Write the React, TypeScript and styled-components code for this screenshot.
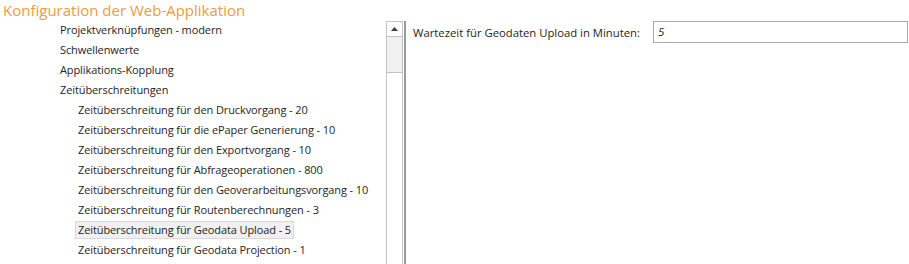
import React from "react";
import styled, { createGlobalStyle } from "styled-components";

const Global = createGlobalStyle`
  html, body { margin: 0; padding: 0; background: #ffffff; }
  body { font-family: "Open Sans", "Noto Sans", sans-serif; color: #1e1e1e; }
  #root { width: 909px; height: 264px; overflow: hidden; }
`;

const Page = styled.div`
  display: flex;
  flex-direction: column;
  width: 909px;
  height: 264px;
  overflow: hidden;
`;

const Title = styled.h1`
  margin: 0;
  height: 20px;
  padding-left: 3px;
  font-size: 15px;
  font-weight: 400;
  line-height: 20px;
  color: #ef9b41;
  white-space: nowrap;
`;

const Main = styled.div`
  display: flex;
  flex: 1;
  min-height: 0;
`;

const TreePanel = styled.div`
  width: 386px;
  overflow: hidden;
  display: flex;
  flex-direction: column;
`;

const Row = styled.div<{ $level: number }>`
  height: 20px;
  flex: 0 0 20px;
  display: flex;
  align-items: center;
  padding-left: ${(p) => (p.$level === 1 ? 57 : 75)}px;
`;

const Label = styled.span<{ $selected?: boolean }>`
  font-size: 11px;
  letter-spacing: -0.1px;
  line-height: 15px;
  white-space: nowrap;
  padding: 0 2px;
  height: 16px;
  background: ${(p) => (p.$selected ? "#f0f0f0" : "transparent")};
  border: 1px solid ${(p) => (p.$selected ? "#d9d9d9" : "transparent")};
`;

const ScrollBar = styled.div`
  width: 17px;
  margin-top: 1px;
  display: flex;
  flex-direction: column;
`;

const ArrowButton = styled.div`
  height: 14px;
  border: 1px solid #c4c4c4;
  background: #ffffff;
  display: flex;
  align-items: center;
  justify-content: center;
`;

const Thumb = styled.div`
  height: 35px;
  background: #f0f0f0;
  border-left: 1px solid #c4c4c4;
  border-right: 1px solid #c4c4c4;
  border-bottom: 1px solid #c4c4c4;
`;

const Track = styled.div`
  flex: 1;
  background: #ffffff;
  border-left: 1px solid #c4c4c4;
  border-right: 1px solid #c4c4c4;
`;

const Splitter = styled.div`
  width: 2px;
  margin-left: 1px;
  margin-top: 1px;
  background: #9a9a9a;
`;

const RightPanel = styled.div`
  flex: 1;
  padding: 1px 1px 0 7px;
`;

const FieldRow = styled.div`
  display: grid;
  grid-template-columns: 240px 1fr;
  align-items: center;
  height: 22px;
`;

const FieldLabel = styled.label`
  font-size: 11.3px;
  white-space: nowrap;
  color: #1e1e1e;
`;

const Input = styled.div`
  height: 20px;
  border: 1px solid #a9a9a9;
  font-size: 11.5px;
  font-style: italic;
  line-height: 20px;
  padding-left: 4px;
`;

const items: { level: number; text: string; selected?: boolean }[] = [
  { level: 1, text: "Projektverknüpfungen - modern" },
  { level: 1, text: "Schwellenwerte" },
  { level: 1, text: "Applikations-Kopplung" },
  { level: 1, text: "Zeitüberschreitungen" },
  { level: 2, text: "Zeitüberschreitung für den Druckvorgang - 20" },
  { level: 2, text: "Zeitüberschreitung für die ePaper Generierung - 10" },
  { level: 2, text: "Zeitüberschreitung für den Exportvorgang - 10" },
  { level: 2, text: "Zeitüberschreitung für Abfrageoperationen - 800" },
  { level: 2, text: "Zeitüberschreitung für den Geoverarbeitungsvorgang - 10" },
  { level: 2, text: "Zeitüberschreitung für Routenberechnungen - 3" },
  { level: 2, text: "Zeitüberschreitung für Geodata Upload - 5", selected: true },
  { level: 2, text: "Zeitüberschreitung für Geodata Projection - 1" },
];

export default function App() {
  return (
    <>
      <Global />
      <Page>
        <Title>Konfiguration der Web-Applikation</Title>
        <Main>
          <TreePanel>
            {items.map((it) => (
              <Row key={it.text} $level={it.level}>
                <Label $selected={it.selected}>{it.text}</Label>
              </Row>
            ))}
          </TreePanel>
          <ScrollBar>
            <ArrowButton>
              <svg width="7" height="4" viewBox="0 0 7 4">
                <polygon points="0,4 7,4 3.5,0" fill="#404040" />
              </svg>
            </ArrowButton>
            <Thumb />
            <Track />
          </ScrollBar>
          <Splitter />
          <RightPanel>
            <FieldRow>
              <FieldLabel>Wartezeit für Geodaten Upload in Minuten:</FieldLabel>
              <Input>5</Input>
            </FieldRow>
          </RightPanel>
        </Main>
      </Page>
    </>
  );
}
